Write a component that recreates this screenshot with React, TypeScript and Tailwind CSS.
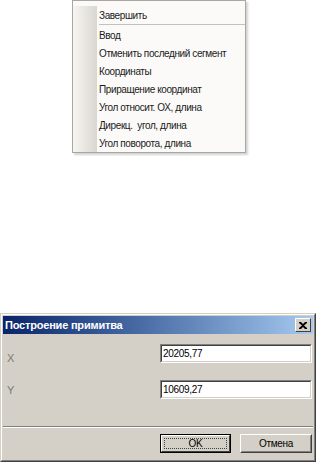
import React from "react";

const items = [
  "Ввод",
  "Отменить последний сегмент",
  "Координаты",
  "Приращение координат",
  "Угол относит. ОХ, длина",
  "Дирекц.  угол, длина",
  "Угол поворота, длина",
];

function MenuItem({ label }: { label: string }) {
  return (
    <div className="flex h-[18px] items-center">
      <div className="w-[24px] shrink-0 self-stretch bg-gradient-to-r from-[#f6f5f2] to-[#d9d7d0]" />
      <div className="pl-[2px] whitespace-pre text-[10px] tracking-[-0.4px] text-[#1a1a1a]">{label}</div>
    </div>
  );
}

function Input({ value }: { value: string }) {
  return (
    <div className="w-[152px] h-[19px] border border-t-[#808080] border-l-[#808080] border-b-white border-r-white">
      <div className="h-full border border-t-[#404040] border-l-[#404040] border-b-[#d4d0c8] border-r-[#d4d0c8] bg-white flex items-center pl-[1px] text-[10px] tracking-[-0.3px] text-black">
        {value}
      </div>
    </div>
  );
}

export default function App() {
  return (
    <div
      className="w-[319px] h-[464px] bg-white overflow-hidden flex flex-col"
      style={{ fontFamily: '"Liberation Sans", Arial, sans-serif' }}
    >
      {/* Context menu */}
      <div className="ml-[72px] w-[174px] h-[153px] border border-[#a9a7a2] bg-[#fbfaf9] shadow-[2px_2px_2px_rgba(0,0,0,0.18)] flex flex-col pt-[5px]">
        <MenuItem label="Завершить" />
        <div className="flex h-[2px]">
          <div className="w-[24px] shrink-0 bg-gradient-to-r from-[#f6f5f2] to-[#d9d7d0]" />
          <div className="ml-[2px] flex-1 h-[1px] bg-[#c5c2b8]" />
        </div>
        {items.map((t) => (
          <MenuItem key={t} label={t} />
        ))}
      </div>

      {/* Dialog */}
      <div className="mt-[160px] w-[316px] h-[149px] border border-t-[#d4d0c8] border-l-[#d4d0c8] border-b-[#404040] border-r-[#404040]">
        <div className="h-full border border-t-white border-l-white border-b-[#808080] border-r-[#808080] bg-[#d4d0c8] p-[1px] flex flex-col">
          <div className="h-[18px] bg-gradient-to-r from-[#0a246a] to-[#a6caf0] flex items-center pl-[2px] pr-[2px]">
            <span className="text-[11px] font-bold tracking-[-0.2px] text-white">Построение примитва</span>
            <div className="ml-auto w-[16px] h-[14px] border border-t-white border-l-white border-b-[#404040] border-r-[#404040] bg-[#d4d0c8] flex items-center justify-center">
              <svg width="8" height="7" viewBox="0 0 8 7">
                <path d="M0 0h2l2 2 2-2h2v1L5 3.5 8 6v1H6L4 5 2 7H0V6l3-2.5L0 1z" fill="#000" />
              </svg>
            </div>
          </div>
          <div className="flex flex-col pl-[4px] pr-[1px]">
            <div className="mt-[10px] flex items-start">
              <span className="mt-[6px] text-[11px] text-[#7a7a7a]">X</span>
              <div className="ml-auto">
                <Input value="20205,77" />
              </div>
            </div>
            <div className="mt-[13px] flex items-start">
              <span className="mt-[2px] text-[11px] text-[#7a7a7a]">Y</span>
              <div className="ml-auto">
                <Input value="10609,27" />
              </div>
            </div>
          </div>
          <div className="mt-[27px] h-[2px] border-t border-t-[#808080] border-b border-b-white" />
          <div className="mt-[6px] flex justify-end gap-[9px] pr-[1px]">
            <div className="w-[71px] h-[19px] border border-black">
              <div className="h-full border border-t-white border-l-white border-b-[#404040] border-r-[#404040] bg-[#d4d0c8] p-[2px]">
                <div className="h-full border border-dotted border-[#404040] flex items-center justify-center text-[10px] tracking-[-0.3px] text-black">
                  OK
                </div>
              </div>
            </div>
            <div className="w-[72px] h-[19px] border border-t-white border-l-white border-b-[#404040] border-r-[#404040]">
              <div className="h-full border border-transparent border-b-[#808080] border-r-[#808080] bg-[#d4d0c8] flex items-center justify-center text-[10px] tracking-[-0.3px] text-black">
                Отмена
              </div>
            </div>
          </div>
        </div>
      </div>
    </div>
  );
}
